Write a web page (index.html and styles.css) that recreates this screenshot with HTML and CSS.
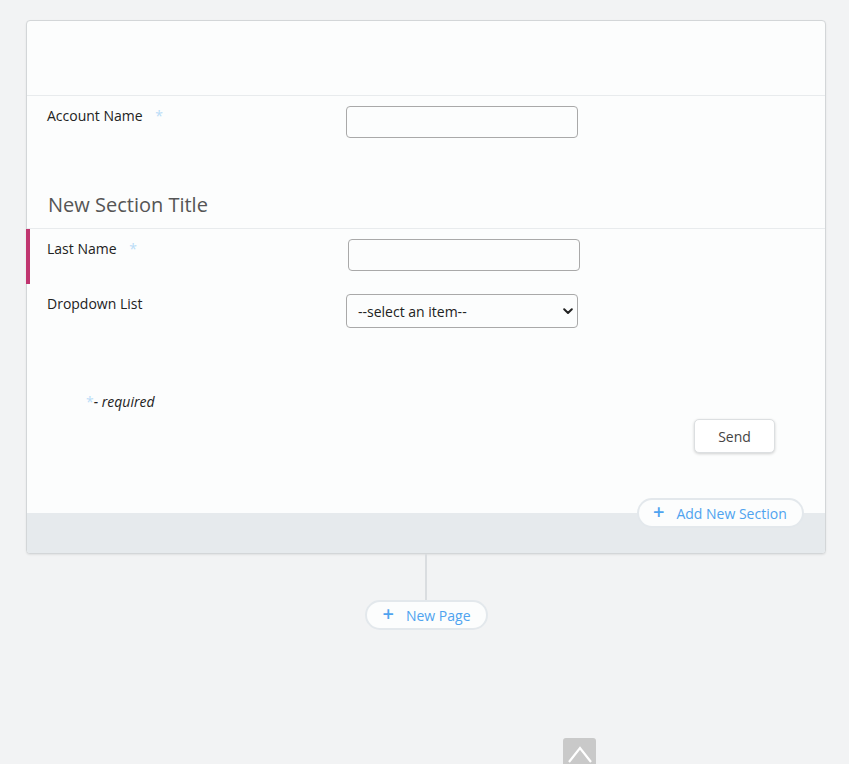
FILE: index.html
```html
<!DOCTYPE html>
<html>
<head>
<meta charset="utf-8">
<link rel="stylesheet" href="styles.css">
</head>
<body>
<div class="page">
  <div class="card">
    <div class="card-header"></div>
    <div class="row row-first">
      <div class="label">Account Name <span class="req">*</span></div>
      <div class="control"><input class="text-input" type="text"></div>
    </div>
    <div class="section-head">New Section Title</div>
    <div class="row row-active">
      <div class="label">Last Name <span class="req">*</span></div>
      <div class="control shift"><input class="text-input" type="text"></div>
    </div>
    <div class="row">
      <div class="label">Dropdown List</div>
      <div class="control">
        <div class="select-wrap">
          <select class="select"><option>--select an item--</option></select>
          <svg class="chev" width="10" height="7" viewBox="0 0 10 7"><path d="M1.2 1.3 L5 5 L8.8 1.3" fill="none" stroke="#222" stroke-width="2" stroke-linecap="round" stroke-linejoin="round"/></svg>
        </div>
      </div>
    </div>
    <div class="required-note"><span class="req">*</span>- required</div>
    <div class="actions"><button class="send">Send</button></div>
    <div class="card-footer">
      <button class="pill add-section"><span class="plus">+</span>Add New Section</button>
    </div>
  </div>
  <div class="connector"></div>
  <button class="pill new-page"><span class="plus">+</span>New Page</button>
</div>
<div class="to-top">
  <svg width="34" height="26" viewBox="0 0 34 26"><path d="M6 24 L17 10 L28 24" fill="none" stroke="#fff" stroke-width="2.2"/></svg>
</div>
</body>
</html>
```
FILE: styles.css
```css
html, body {
  margin: 0;
  padding: 0;
}
body {
  background: #f2f3f4;
  font-family: "Open Sans", "Liberation Sans", sans-serif;
  color: #222;
  height: 764px;
  overflow: hidden;
  position: relative;
}
.page {
  padding: 20px 23px 0 26px;
  display: flex;
  flex-direction: column;
  align-items: center;
}
.card {
  width: 798px;
  background: #fcfdfd;
  border: 1px solid #d3d6d8;
  border-radius: 4px;
  box-shadow: 0 1px 2px rgba(0,0,0,0.08);
  align-self: flex-start;
}
.card-header {
  height: 74px;
  border-bottom: 1px solid #e8ebed;
}
.row {
  display: flex;
  padding: 10px 0 13px 20px;
  border-left: 4px solid transparent;
  margin-left: -1px;
}
.row-first {
  height: 32px;
}
.row-active {
  border-left-color: #c0356f;
}
.label {
  width: 299px;
  font-size: 14px;
  line-height: 20px;
  color: #222;
  flex: none;
  margin-left: -3px;
}
.req {
  color: #b9dcf7;
  margin-left: 9px;
}
.control.shift {
  padding-left: 2px;
}
.text-input {
  width: 232px;
  height: 32px;
  box-sizing: border-box;
  border: 1px solid #a9a9a9;
  border-radius: 4px;
  background: #fcfdfd;
  margin: 0;
}
.section-head {
  font-size: 20px;
  line-height: 27px;
  color: #555;
  padding: 40px 0 10px 21px;
  border-bottom: 1px solid #e8ebed;
}
.select-wrap {
  position: relative;
  width: 232px;
  height: 34px;
}
.select {
  -webkit-appearance: none;
  appearance: none;
  width: 232px;
  height: 34px;
  box-sizing: border-box;
  border: 1px solid #a9a9a9;
  border-radius: 4px;
  background: #fcfdfd;
  font-family: "Open Sans", "Liberation Sans", sans-serif;
  font-size: 14px;
  color: #222;
  padding: 0 0 0 11px;
  margin: 0;
}
.chev {
  position: absolute;
  right: 5px;
  top: 14px;
}
.required-note {
  margin-top: 51px;
  padding-left: 59px;
  font-size: 14px;
  line-height: 20px;
  font-style: italic;
  color: #222;
}
.required-note .req {
  margin-left: 0;
  font-style: normal;
}
.actions {
  display: flex;
  justify-content: flex-end;
  padding: 7px 50px 0 0;
}
.send {
  width: 81px;
  height: 34px;
  background: #fff;
  border: 1px solid #dcdfe1;
  border-radius: 5px;
  box-shadow: 0 1px 3px rgba(0,0,0,0.18);
  font-family: "Open Sans", "Liberation Sans", sans-serif;
  font-size: 14px;
  color: #444;
  padding: 0;
}
.card-footer {
  position: relative;
  margin-top: 60px;
  height: 40px;
  background: #e6eaed;
  border-radius: 0 0 3px 3px;
}
.pill {
  background: #fcfdfd;
  border: 2px solid #e3e8ec;
  border-radius: 15px;
  color: #4fa3ef;
  font-family: "Open Sans", "Liberation Sans", sans-serif;
  font-size: 14px;
  height: 30px;
  box-sizing: border-box;
  padding: 0 14px 0 14px;
  display: flex;
  align-items: center;
}
.plus {
  font-size: 20px;
  font-weight: 600;
  line-height: 20px;
  margin-right: 12px;
  margin-top: -2px;
}
.add-section {
  position: absolute;
  right: 21px;
  top: -15px;
  width: 167px;
}
.connector {
  width: 2px;
  height: 47px;
  background: #dadde0;
}
.new-page {
  width: 123px;
  margin-top: -1px;
  padding-left: 16px;
}
.to-top {
  position: absolute;
  left: 563px;
  top: 738px;
  width: 33px;
  height: 34px;
  background: #c9c9c9;
  border-radius: 3px;
}
.to-top svg {
  display: block;
}
```
